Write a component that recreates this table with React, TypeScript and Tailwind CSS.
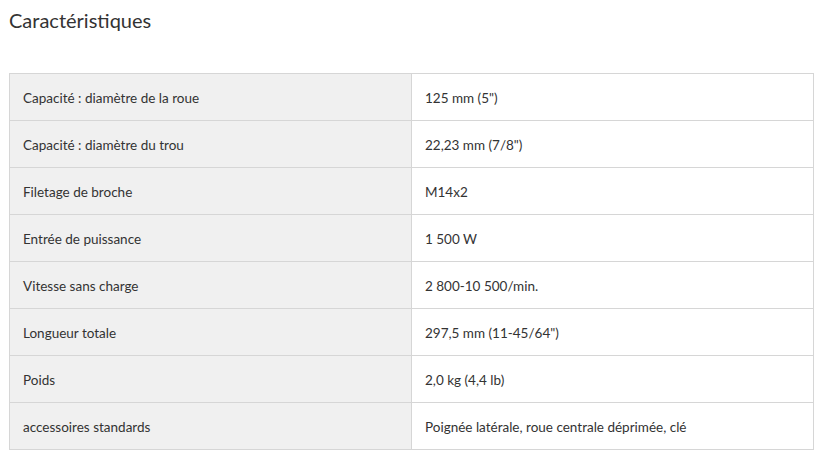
import React from "react";

const specs: [string, string][] = [
	["Capacité : diamètre de la roue", "125 mm (5\")"],
	["Capacité : diamètre du trou", "22,23 mm (7/8\")"],
	["Filetage de broche", "M14x2"],
	["Entrée de puissance", "1 500 W"],
	["Vitesse sans charge", "2 800-10 500/min."],
	["Longueur totale", "297,5 mm (11-45/64\")"],
	["Poids", "2,0 kg (4,4 lb)"],
	["accessoires standards", "Poignée latérale, roue centrale déprimée, clé"],
];

const App = () => {
	return (
		<div className="w-[820px] h-[454px] bg-white pl-[9px] pr-[6px] pt-[7px] font-['Lato',sans-serif] text-[#333]">
			<h2 className="text-[20px] leading-[26px] font-normal text-[#333]">Caractéristiques</h2>

			{/* Spec table */}
			<table className="mt-[40px] w-[805px] border-collapse border border-[#d6d6d6] text-[13.5px]">
				<tbody>
					{specs.map(([label, value]) => (
						<tr key={label} className="h-[47px]">
							<td className="w-[402px] bg-[#f0f0f0] border border-[#d6d6d6] pl-[13px] pt-[3px] align-middle">{label}</td>
							<td className="bg-white border border-[#d6d6d6] pl-[13px] pt-[3px] align-middle">{value}</td>
						</tr>
					))}
				</tbody>
			</table>
		</div>
	);
};

export default App;
